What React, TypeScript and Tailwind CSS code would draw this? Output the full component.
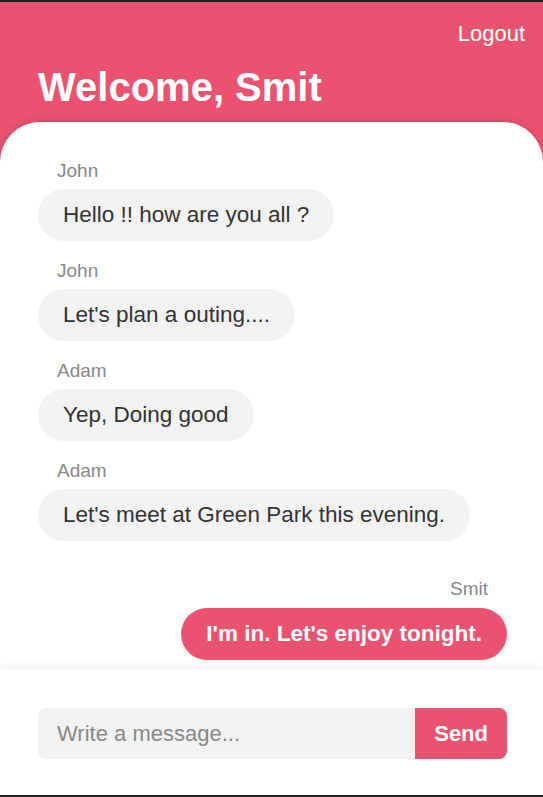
const messages = [
  { name: 'John', text: 'Hello !! how are you all ?', mine: false },
  { name: 'John', text: "Let's plan a outing....", mine: false },
  { name: 'Adam', text: 'Yep, Doing good', mine: false },
  { name: 'Adam', text: "Let's meet at Green Park this evening.", mine: false },
  { name: 'Smit', text: "I'm in. Let's enjoy tonight.", mine: true },
]

function Message({ name, text, mine }: { name: string; text: string; mine: boolean }) {
  return (
    <div className={mine ? 'mt-[18px] flex flex-col items-end' : 'flex flex-col items-start'}>
      <span className="px-[19px] text-[19px] leading-[22px] text-[#888]">{name}</span>
      <div
        className={
          mine
            ? 'mt-[8px] flex h-[52px] items-center rounded-full bg-[#e95370] px-[25px] text-[22.5px] font-bold text-white'
            : 'mt-[7px] flex h-[52px] items-center rounded-full bg-[#f2f2f2] px-[25px] text-[22.5px] text-[#333]'
        }
      >
        {text}
      </div>
    </div>
  )
}

export default function App() {
  return (
    <div
      className="flex h-[797px] flex-col border-y-2 border-[#222] bg-[#e95370]"
      style={{ fontFamily: '"Liberation Sans", Arial, sans-serif' }}
    >
      <header className="px-[18px] pt-[19px] pb-[12px] text-white">
        <div className="flex justify-end">
          <button className="text-[22px] leading-[26px]">Logout</button>
        </div>
        <h1 className="mt-[17px] pl-[20px] text-[40px] leading-[46px] font-bold">Welcome, Smit</h1>
      </header>

      <main className="flex flex-1 flex-col overflow-hidden rounded-t-[40px] bg-white shadow-[0_-2px_6px_rgba(0,0,0,0.12)]">
        <div className="flex flex-1 flex-col gap-[19px] overflow-hidden pr-[36px] pl-[38px] pt-[38px]">
          {messages.map((m, i) => (
            <Message key={i} {...m} />
          ))}
        </div>

        <footer className="relative bg-white pr-[36px] pl-[38px] pt-[38px] pb-[36px] shadow-[0_-4px_10px_rgba(0,0,0,0.05)]">
          <div className="flex h-[51px]">
            <input
              placeholder="Write a message..."
              className="min-w-0 flex-1 rounded-l-[8px] bg-[#f2f2f2] pl-[19px] text-[22px] text-[#333] outline-none placeholder:text-[#888]"
            />
            <button className="rounded-r-[8px] bg-[#e95370] px-[19px] text-[22px] font-bold text-white">
              Send
            </button>
          </div>
        </footer>
      </main>
    </div>
  )
}
